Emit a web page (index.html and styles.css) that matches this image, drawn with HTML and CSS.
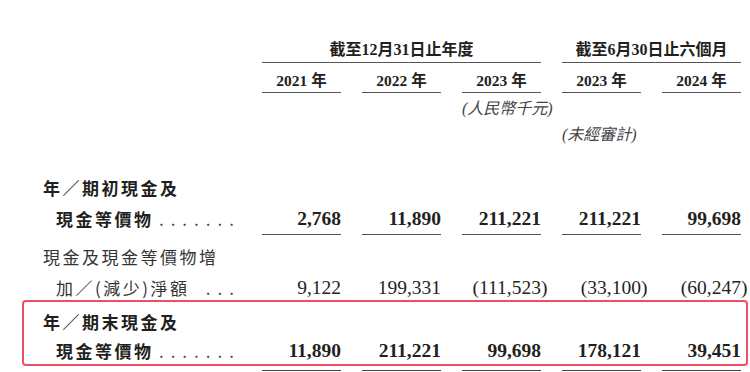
FILE: index.html
```html
<!DOCTYPE html>
<html lang="zh-Hant">
<head>
    <meta charset="UTF-8">
    <meta name="viewport" content="width=device-width, initial-scale=1.0">
    <title>現金流量摘要</title>
    <link rel="stylesheet" href="styles.css">
</head>
<body>
    <div class="sheet">
        <div class="row head-group">
            <div></div>
            <div class="group span3">截至12月31日止年度</div>
            <div class="group span2">截至6月30日止六個月</div>
        </div>
        <div class="row head-years">
            <div></div>
            <div class="year">2021 年</div>
            <div class="year">2022 年</div>
            <div class="year">2023 年</div>
            <div class="year">2023 年</div>
            <div class="year">2024 年</div>
        </div>
        <div class="row note">
            <div></div>
            <div class="unit">(人民幣千元)</div>
        </div>
        <div class="row note">
            <div></div>
            <div class="audit">(未經審計)</div>
        </div>

        <div class="row data first strong">
            <div class="label">年／期初現金及</div>
        </div>
        <div class="row data tight strong">
            <div class="label indent">現金等價物<span class="dots">.......</span></div>
            <div class="num ruled">2,768</div>
            <div class="num ruled">11,890</div>
            <div class="num ruled">211,221</div>
            <div class="num ruled">211,221</div>
            <div class="num ruled">99,698</div>
        </div>
        <div class="row data gap">
            <div class="label">現金及現金等價物增</div>
        </div>
        <div class="row data short">
            <div class="label indent">加／(減少)淨額<span class="dots">...</span></div>
            <div class="num">9,122</div>
            <div class="num">199,331</div>
            <div class="num">(111,523<span class="hang">)</span></div>
            <div class="num">(33,100<span class="hang">)</span></div>
            <div class="num">(60,247<span class="hang">)</span></div>
        </div>

        <div class="highlight">
            <div class="row data lead strong">
                <div class="label">年／期末現金及</div>
            </div>
            <div class="row data last strong">
                <div class="label indent">現金等價物<span class="dots">.......</span></div>
                <div class="num">11,890</div>
                <div class="num">211,221</div>
                <div class="num">99,698</div>
                <div class="num">178,121</div>
                <div class="num">39,451</div>
            </div>
        </div>
        <div class="row totals">
            <div></div>
            <div class="double"></div>
            <div class="double"></div>
            <div class="double"></div>
            <div class="double"></div>
            <div class="double"></div>
        </div>
    </div>
</body>
</html>
```

FILE: styles.css
```css
body {
    margin: 0;
    background: #fff;
    color: #231f20;
}
.sheet {
    width: 750px;
    height: 372px;
    overflow: hidden;
    box-sizing: border-box;
    padding: 38px 4px 0 24px;
}
.row {
    display: grid;
    grid-template-columns: 217px repeat(5, 79px);
    column-gap: 21px;
}

/* column headings */
.head-group {
    font: bold 16px "Liberation Serif", "Noto Sans CJK TC", serif;
    line-height: 24px;
}
.group {
    text-align: center;
    border-bottom: 1px solid #555;
}
.span3 {
    grid-column: 2 / span 3;
}
.span2 {
    grid-column: 5 / span 2;
}
.head-years {
    padding-top: 7px;
    font: bold 15.5px "Liberation Serif", "Noto Sans CJK TC", serif;
    line-height: 22px;
}
.year {
    text-align: center;
    border-bottom: 1px solid #555;
}
.note {
    padding-top: 6px;
    font: italic 16px "Liberation Serif", "Noto Sans CJK TC", serif;
    line-height: 20px;
    color: #444;
}
.unit {
    grid-column: 4;
    margin-right: -2px;
    text-align: right;
    white-space: nowrap;
}
.audit {
    grid-column: 5 / span 2;
    white-space: nowrap;
}
.hang {
    margin-right: -0.33em;
}

/* body rows */
.data {
    line-height: 32px;
    color: #333;
}
.data.first {
    margin-top: 27px;
}
.data.tight {
    line-height: 30px;
}
.data.gap {
    margin-top: 7px;
    line-height: 30px;
}
.data.short {
    padding-top: 3px;
    line-height: 25px;
}
.data.lead {
    padding-top: 5px;
    line-height: 30px;
}
.data.last {
    line-height: 27px;
}
.label {
    display: flex;
    padding-left: 19px;
    font-family: "Noto Sans CJK TC", sans-serif;
    font-size: 17px;
    letter-spacing: 2.5px;
    white-space: nowrap;
}
.label.indent {
    padding-left: 32px;
}
.dots {
    margin-left: auto;
    font-weight: normal;
    letter-spacing: 7px;
    color: #444;
}
.strong .label {
    font-weight: bold;
    color: #231f20;
}
.num {
    font-family: "Liberation Serif", serif;
    font-size: 19.5px;
    text-align: right;
    color: #231f20;
}
.strong .num {
    font-weight: bold;
}
.ruled {
    border-bottom: 1px solid #555;
}

.highlight {
    margin: 0 -2px;
    border: 2px solid #ee4d66;
    border-radius: 4px;
}
.totals {
    margin-top: 4px;
}
.double {
    height: 0;
    border-top: 3px double #444;
}
```
